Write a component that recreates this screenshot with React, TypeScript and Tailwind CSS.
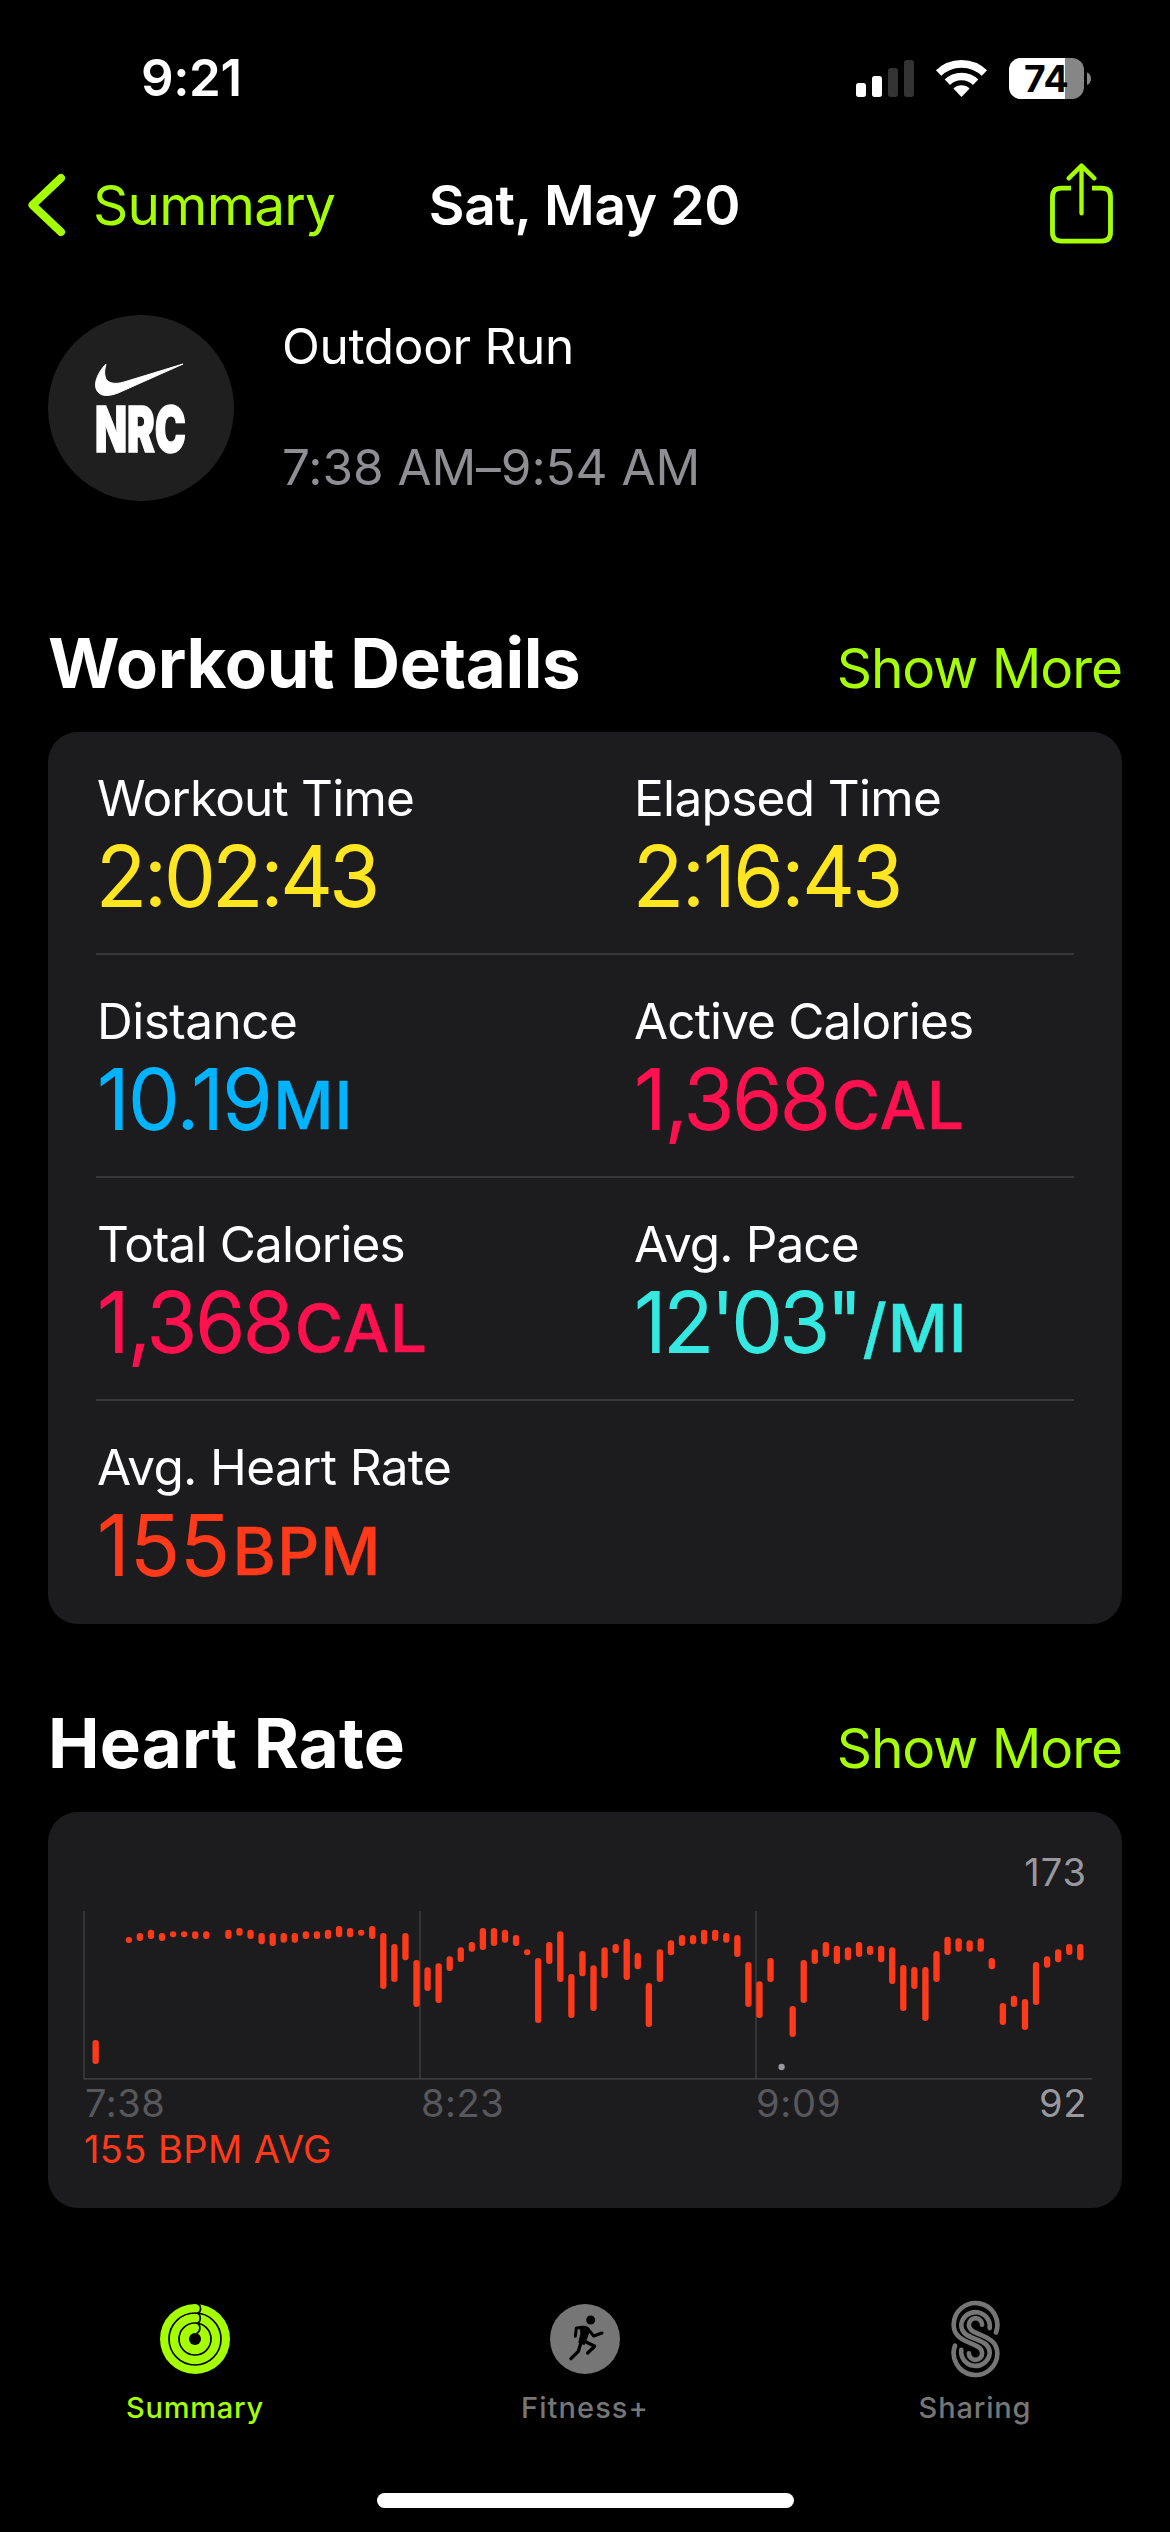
import React from 'react';

interface Metric {
    label: string;
    labelClass: string;
    value: string;
    valueClass: string;
    unit?: string;
    unitClass?: string;
    color: string;
}

const metrics: Metric[] = [
    { label: 'Workout Time', labelClass: 'tracking-[-0.8px]', value: '2:02:43', valueClass: '-ml-px tracking-[-3.1px]', color: 'text-[#ffe620]' },
    { label: 'Elapsed Time', labelClass: 'tracking-[-0.67px]', value: '2:16:43', valueClass: '-ml-px tracking-[-2.2px]', color: 'text-[#ffe620]' },
    { label: 'Distance', labelClass: 'tracking-[-0.5px]', value: '10.19', valueClass: 'tracking-[-1.3px]', unit: 'MI', unitClass: 'ml-[2px] tracking-[1px]', color: 'text-[#00b4ff]' },
    { label: 'Active Calories', labelClass: 'tracking-[-0.87px]', value: '1,368', valueClass: 'tracking-[-2px]', unit: 'CAL', unitClass: 'ml-[3px] tracking-[0.6px]', color: 'text-[#ff1150]' },
    { label: 'Total Calories', labelClass: 'tracking-[-0.87px]', value: '1,368', valueClass: 'tracking-[-2px]', unit: 'CAL', unitClass: 'ml-[3px] tracking-[0.6px]', color: 'text-[#ff1150]' },
    { label: 'Avg. Pace', labelClass: 'tracking-[-0.9px]', value: '12\'03"', valueClass: 'tracking-[-3.4px]', unit: '/MI', unitClass: 'ml-[3px] tracking-[0.8px]', color: 'text-[#35e9e1]' },
    { label: 'Avg. Heart Rate', labelClass: 'tracking-[-0.63px]', value: '155', valueClass: 'tracking-[0.8px]', unit: 'BPM', unitClass: 'ml-[2px] tracking-[1px]', color: 'text-[#ff3a1a]' },
];

// [slot, top, bottom]
const bars: [number, number, number][] = [
    [0, 720, 792], [3, 411, 429], [4, 399, 423], [5, 389, 417], [6, 399, 423], [7, 394, 412], [8, 394, 412],
    [9, 394, 417], [10, 394, 417], [12, 389, 417], [13, 384, 407], [14, 389, 417], [15, 399, 433], [16, 399, 438],
    [17, 399, 428], [18, 399, 428], [19, 394, 417], [20, 394, 417], [21, 389, 417], [22, 378, 412], [23, 384, 412],
    [24, 389, 407], [25, 378, 417], [26, 399, 567], [27, 432, 546], [28, 399, 481], [29, 480, 621], [30, 502, 573],
    [31, 490, 609], [32, 469, 513], [33, 442, 486], [34, 426, 455], [35, 384, 450], [36, 384, 438], [37, 389, 428],
    [38, 405, 438], [39, 448, 466], [40, 474, 669], [41, 426, 492], [42, 394, 546], [43, 522, 654], [44, 453, 529],
    [45, 496, 633], [46, 442, 535], [47, 432, 460], [48, 416, 540], [49, 459, 508], [50, 549, 681], [51, 448, 546],
    [52, 421, 466], [53, 405, 438], [54, 405, 433], [55, 389, 433], [56, 389, 423], [57, 399, 428], [58, 405, 471],
    [59, 486, 621], [60, 544, 654], [61, 474, 546], [63, 618, 711], [64, 480, 609], [65, 448, 492], [66, 426, 471],
    [67, 437, 492], [68, 442, 481], [69, 426, 471], [70, 437, 465], [71, 437, 487], [72, 442, 552], [73, 495, 633],
    [74, 501, 567], [75, 501, 663], [76, 453, 546], [77, 410, 465], [78, 415, 455], [79, 421, 455], [80, 415, 455],
    [81, 474, 508], [82, 609, 675], [83, 587, 621], [84, 597, 690], [85, 486, 615], [86, 469, 503], [87, 448, 487],
    [88, 432, 465], [89, 432, 481],
];

const barX = (slot: number) => 35 + slot * 33.19;

const StatusIcons: React.FC = () => (
    <svg width="235" height="61" viewBox="48 21 705 183">
        <rect x="48" y="126" width="30" height="42" rx="8" fill="#fff" />
        <rect x="96" y="105" width="30" height="63" rx="8" fill="#fff" />
        <rect x="144" y="81" width="30" height="87" rx="8" fill="#333" />
        <rect x="192" y="57" width="30" height="111" rx="8" fill="#333" />
        <clipPath id="wifi">
            <path d="M364.5 168 L204 0 H525 Z" />
        </clipPath>
        <g clipPath="url(#wifi)" fill="none" stroke="#fff" strokeWidth="23">
            <circle cx="364.5" cy="168" r="99.5" />
            <circle cx="364.5" cy="168" r="61.5" />
            <circle cx="364.5" cy="168" r="35" fill="#fff" stroke="none" />
        </g>
        <clipPath id="battery">
            <rect x="507" y="51" width="225" height="123" rx="36" />
        </clipPath>
        <g clipPath="url(#battery)">
            <rect x="507" y="51" width="225" height="123" fill="#868686" />
            <rect x="507" y="51" width="168" height="123" fill="#fff" />
        </g>
        <path d="M741 94 C749 98 753 105 753 113 C753 121 749 128 741 132 Z" fill="#868686" />
        <text x="552" y="153" fontSize="112" fontWeight="700" fill="#000" className="font-[Inter]">74</text>
    </svg>
);

const ShareIcon: React.FC = () => (
    <svg width="63" height="81" viewBox="630 367 189 243" fill="none" stroke="currentColor" strokeWidth="14.5">
        <path d="M693 442.5 H664 Q637.5 442.5 637.5 469 V575 Q637.5 601.5 664 601.5 H785 Q811.5 601.5 811.5 575 V469 Q811.5 442.5 785 442.5 H756" />
        <path d="M724.5 378 V518 M686 413 L724.5 375 L763 413" strokeWidth="13" strokeLinecap="round" strokeLinejoin="round" />
    </svg>
);

const RunClubBadge: React.FC = () => (
    <svg width="186" height="186" viewBox="0 0 186 186">
        <circle cx="93" cy="93" r="93" fill="#1f1f1f" />
        <path d="M58 49 C50 57 44 70 50 77 C54 82 62 81 70 78 L135 49 L76 67 C66 70 58 68 57 61 C56 57 57 53 58 49 Z" fill="#fff" stroke="#fff" strokeWidth="1" strokeLinejoin="round" />
        <text x="47" y="137" fontSize="63" fontWeight="900" fill="#fff" stroke="#fff" strokeWidth="1.5" textLength="91" lengthAdjust="spacingAndGlyphs" className="font-[Inter]">NRC</text>
    </svg>
);

const RingsIcon: React.FC = () => (
    <svg width="70" height="70" viewBox="30 30 210 210" fill="none" stroke="#000" strokeWidth="5">
        <circle cx="135" cy="135" r="105" fill="currentColor" stroke="none" />
        <circle cx="135" cy="135" r="78" />
        <circle cx="135" cy="135" r="48" />
        <circle cx="135" cy="135" r="18" fill="#000" stroke="none" />
        <path d="M140 28 C155 32 155 53 143 58 C153 62 154 83 142 88 C152 93 153 112 140 118" />
    </svg>
);

const RunnerIcon: React.FC = () => (
    <svg width="70" height="70" viewBox="30 30 210 210" fill="none" stroke="#000" strokeLinecap="round" strokeLinejoin="round">
        <circle cx="135" cy="135" r="105" fill="currentColor" stroke="none" />
        <circle cx="152" cy="78" r="13.5" fill="#000" stroke="none" />
        <path d="M106 127 L109 102 L132 100" strokeWidth="9" />
        <path d="M120 97 H138 Q145 99 149 108 L140 136 L133 152 L116 146 L122 118 Z" fill="#000" strokeWidth="2" />
        <path d="M143 104 L161 126 L186 117" strokeWidth="9" />
        <path d="M131 140 L164 157 L143 177" strokeWidth="10" />
        <path d="M123 146 L115 172 L93 194" strokeWidth="10" />
    </svg>
);

const SharingIcon: React.FC = () => (
    <svg width="49" height="78" viewBox="209 61 148 234" fill="none" stroke="currentColor" strokeWidth="14" strokeLinecap="round">
        <path d="M345 158 A66 66 0 1 0 217 135 C217 175 255 185 278 195 C295 203 303 208 303 221 A20 20 0 0 1 263 221" />
        <path d="M326 145 A43 43 0 1 0 240 135 C240 162 262 170 283 178 S326 194 326 221 A43 43 0 1 1 240 211" />
        <path d="M303 135 A20 20 0 0 0 263 135 C263 148 271 153 288 161 C311 171 349 181 349 221 A66 66 0 1 1 221 198" />
    </svg>
);

const SectionHeader: React.FC<{ title: string; titleClass: string }> = ({ title, titleClass }) => (
    <div className={`flex h-20 items-baseline justify-between text-[69px] leading-[80px] font-bold ${titleClass}`}>
        <h2>{title}</h2>
        <button className="text-[55px] font-normal tracking-[-1.05px] text-[#a6ff00]">Show More</button>
    </div>
);

const MetricCell: React.FC<{ metric: Metric }> = ({ metric }) => (
    <div className="pt-9 pl-px">
        <div className={`text-[49.5px] leading-[60px] ${metric.labelClass}`}>{metric.label}</div>
        <div className={`mt-1.5 text-[83px] leading-[84px] font-light whitespace-nowrap [-webkit-text-stroke:1.8px_currentColor] ${metric.color}`}>
            <span className={metric.valueClass}>{metric.value}</span>
            {metric.unit && <span className={`text-[66px] leading-none font-medium [-webkit-text-stroke:0.4px_currentColor] ${metric.unitClass}`}>{metric.unit}</span>}
        </div>
    </div>
);

const HeartRateChart: React.FC = () => (
    <div className="mt-[29px] h-[396px] rounded-[30px] bg-[#1c1c1e] pt-[37px] pl-9 text-[38px] leading-[46px]">
        <div className="pr-[35px] text-right tracking-[1px] text-[#98989e]">173</div>
        <svg width="1008" height="185" viewBox="0 285 3024 555" className="block overflow-visible">
            <path d="M0 333 V837 M1008 333 V837 M2016 333 V837 M-2 836.5 H3024" stroke="#3a3a3c" strokeWidth="5" />
            {bars.map(([slot, top, bottom]) => (
                <rect key={slot} x={barX(slot) - 9.5} y={top} width="19" height={bottom - top} rx="9" fill="#ff3a1a" />
            ))}
            <circle cx={barX(62)} cy="801" r="9.5" fill="#98989e" />
        </svg>
        <div className="flex text-[#58585c]">
            <span className="w-[336px] pl-px tracking-[0.5px]">7:38</span>
            <span className="w-[336px] pl-px tracking-[0.5px]">8:23</span>
            <span className="tracking-[0.8px]">9:09</span>
            <span className="ml-auto pr-[35px] tracking-[0.6px] text-[#98989e]">92</span>
        </div>
        <div className="tracking-[0.4px] text-[#ff3a1a]">155 BPM AVG</div>
    </div>
);

const App: React.FC = () => {
    return (
        <div className="flex h-[2532px] w-[1170px] flex-col overflow-hidden bg-black font-[Inter,sans-serif] text-white">
            <div className="flex h-[156px] items-center justify-between pr-[79px] pl-[141px]">
                <span className="text-[51px] leading-[60px] font-semibold tracking-[-0.4px]">9:21</span>
                <StatusIcons />
            </div>

            <div className="grid h-[98px] grid-cols-3 items-center pr-[57px] pl-[27px] text-[55px] text-[#a6ff00]">
                <div className="flex items-center gap-[27px]">
                    <svg width="39" height="64" viewBox="0 0 39 64" fill="none" stroke="currentColor" strokeWidth="8" strokeLinecap="round" strokeLinejoin="round">
                        <path d="M34 5 L5.5 32 L34 59" />
                    </svg>
                    <span className="tracking-[-0.75px]">Summary</span>
                </div>
                <h1 className="justify-self-center pl-[29px] font-semibold tracking-[-0.35px] whitespace-nowrap text-white">Sat, May 20</h1>
                <div className="-mt-1 justify-self-end">
                    <ShareIcon />
                </div>
            </div>

            <div className="mt-[61px] flex gap-[49px] px-12">
                <RunClubBadge />
                <div className="flex flex-col gap-[61px] pt-px text-[49.5px] leading-[60px]">
                    <div className="-ml-px tracking-[-0.32px]">Outdoor Run</div>
                    <div className="-ml-px tracking-[-0.07px] text-[#8e8e93]">7:38 AM–9:54 AM</div>
                </div>
            </div>

            <section className="mt-[122px] px-12">
                <SectionHeader title="Workout Details" titleClass="tracking-[-0.35px]" />
                <div className="mt-[29px] rounded-[30px] bg-[#1c1c1e] px-12">
                    {[0, 2, 4, 6].map((start) => (
                        <div key={start} className={`grid h-[223px] grid-cols-[537px_1fr] ${start < 6 ? 'border-b-2 border-[#38383a]' : ''}`}>
                            {metrics.slice(start, start + 2).map((metric) => (
                                <MetricCell key={metric.label} metric={metric} />
                            ))}
                        </div>
                    ))}
                </div>
            </section>

            <section className="mt-[79px] px-12">
                <SectionHeader title="Heart Rate" titleClass="tracking-[0.2px]" />
                <HeartRateChart />
            </section>

            <nav className="mt-[92px] grid grid-cols-3 text-[29px] leading-9 font-medium text-[#767676]">
                <div className="flex flex-col items-center gap-3 text-[#a6ff00]">
                    <div className="flex h-[78px] items-center"><RingsIcon /></div>
                    <span className="tracking-[0.8px]">Summary</span>
                </div>
                <div className="flex flex-col items-center gap-3">
                    <div className="flex h-[78px] items-center"><RunnerIcon /></div>
                    <span className="tracking-[1.07px]">Fitness+</span>
                </div>
                <div className="flex flex-col items-center gap-3">
                    <SharingIcon />
                    <span className="tracking-[0.84px]">Sharing</span>
                </div>
            </nav>

            <div className="mx-auto mt-[67px] h-[15px] w-[417px] rounded-full bg-white" />
        </div>
    );
};

export default App;
